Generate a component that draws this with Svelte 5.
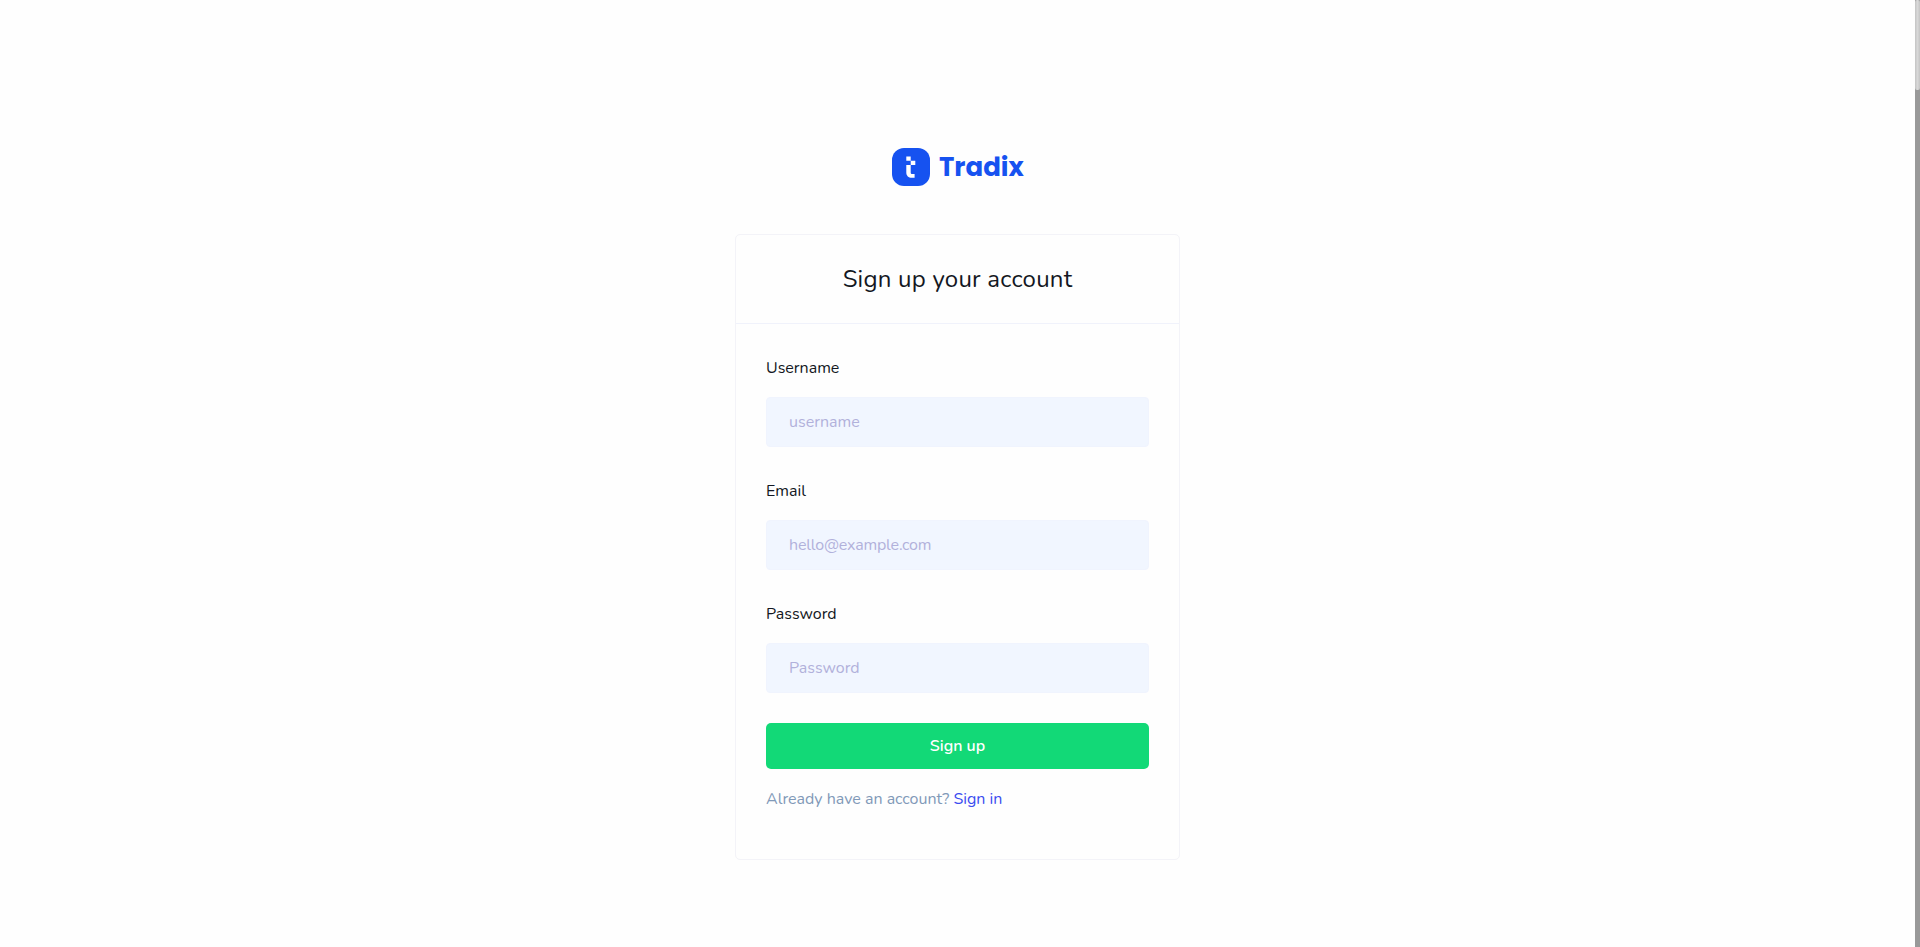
<script>
  const fields = [
    { id: 'username', label: 'Username', type: 'text', placeholder: 'username' },
    { id: 'email', label: 'Email', type: 'email', placeholder: 'hello@example.com' },
    { id: 'password', label: 'Password', type: 'password', placeholder: 'Password' }
  ];
</script>

<div class="page">
  <main>
    <a class="brand" href="#home">
      <svg width="38" height="38" viewBox="0 0 38 38" aria-hidden="true">
        <rect width="38" height="38" rx="12" fill="#1652f0" />
        <path
          fill="#fff"
          d="M14.3 8.5h4.4v4.2h4.6V17h-4.6v7.5c0 1 .6 1.6 1.6 1.6h2.3v3.7h-2.8c-3.3 0-5.5-2-5.5-5.3V17h4.4v-4.3h-4.4z"
        />
      </svg>
      <span class="name">Tradix</span>
    </a>

    <section class="card">
      <header><h4>Sign up your account</h4></header>
      <form>
        {#each fields as f}
          <div class="group">
            <label for={f.id}>{f.label}</label>
            <input id={f.id} type={f.type} placeholder={f.placeholder} />
          </div>
        {/each}
        <button type="button">Sign up</button>
        <p>Already have an account? <a href="#signin">Sign in</a></p>
      </form>
    </section>
  </main>
  <div class="scrollbar"><div class="thumb"></div></div>
</div>

<style>
  :global(body) {
    margin: 0;
    overflow: hidden;
    background: #fefefe;
  }
  .page {
    display: flex;
    height: 947px;
    font-family: Nunito, Lato, sans-serif;
    font-size: 16px;
    color: #131722;
  }
  .page * {
    box-sizing: border-box;
  }
  main {
    flex: 1;
    display: flex;
    flex-direction: column;
    align-items: center;
    padding-top: 148px;
  }
  .brand {
    display: flex;
    align-items: center;
    gap: 9.5px;
    height: 38px;
    width: 132px;
    color: #1652f0;
    text-decoration: none;
  }
  .brand svg {
    flex: none;
  }
  .name {
    font: 700 26px/38px Poppins, Inter, sans-serif;
    white-space: nowrap;
  }
  .card {
    width: 445px;
    height: 626px;
    margin-top: 48px;
    border: 1px solid #f3f3f8;
    border-radius: 5px;
    background: #fefefe;
  }
  header {
    height: 89px;
    border-bottom: 1px solid #f0f2fb;
    display: flex;
    align-items: center;
    justify-content: center;
  }
  h4 {
    margin: 0;
    font-size: 24px;
    font-weight: 400;
    line-height: 30px;
    letter-spacing: 0.24px;
    white-space: nowrap;
  }
  form {
    padding: 30px 30px 0;
  }
  .group {
    margin-bottom: 30px;
  }
  label {
    display: block;
    height: 43px;
    line-height: 29px;
  }
  input {
    display: block;
    width: 100%;
    height: 50px;
    padding: 0 22px;
    border: 1px solid #f0f4fe;
    border-radius: 4px;
    background: #f1f6ff;
    font: inherit;
    outline: none;
  }
  #email {
    letter-spacing: -0.2px;
  }
  input::placeholder {
    color: #b1b1db;
    opacity: 1;
  }
  button {
    display: block;
    width: 100%;
    height: 46px;
    padding: 0;
    border: 0;
    border-radius: 5px;
    background: #12d977;
    color: #fff;
    font: inherit;
    font-weight: 600;
  }
  p {
    margin: 16px 0 0;
    line-height: 28px;
    color: #8199b8;
    white-space: nowrap;
  }
  p a {
    color: #3b4cf0;
    text-decoration: none;
  }
  .scrollbar {
    width: 5px;
    background: #999;
  }
  .thumb {
    height: 90px;
    border-radius: 2px;
    background: linear-gradient(90deg, #c4c4c4, #d8d8d8 50%, #c4c4c4);
  }
</style>
